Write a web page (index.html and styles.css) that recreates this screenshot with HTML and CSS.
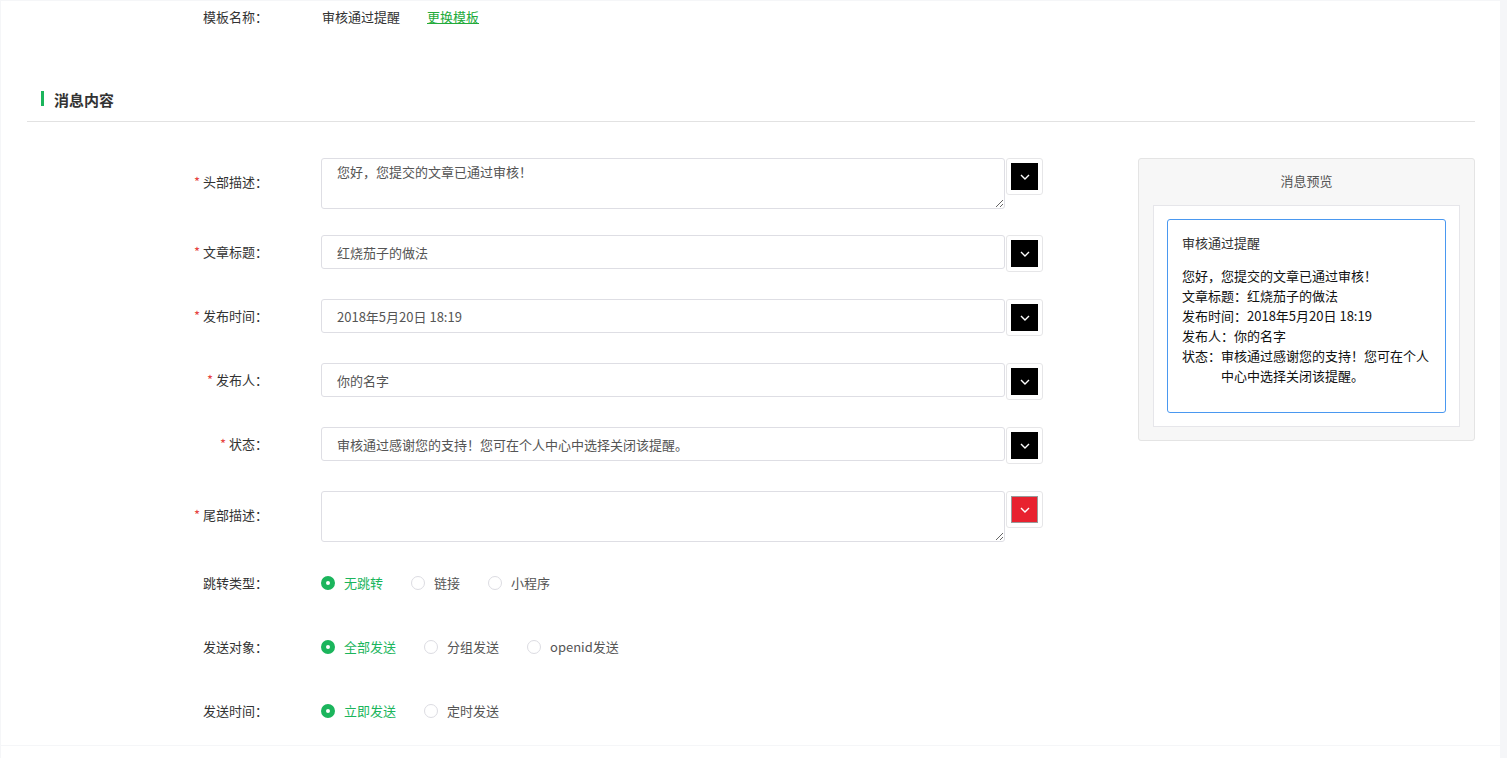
FILE: index.html
```html
<!DOCTYPE html>
<html lang="zh-CN">
<head>
    <meta charset="UTF-8">
    <meta name="viewport" content="width=device-width, initial-scale=1.0">
    <link rel="stylesheet" href="styles.css">
    <title>消息模板</title>
</head>
<body>

    <div class="panel">
        <div class="tpl-row">
            <span class="label">模板名称：</span>
            <span class="tpl-name">审核通过提醒</span>
            <a href="#" class="tpl-link">更换模板</a>
        </div>

        <div class="section">
            <h3 class="section-title">消息内容</h3>

            <div class="content">
                <form class="msg-form">
                    <div class="row row-area">
                        <label class="label label-area"><i>*</i> 头部描述：</label>
                        <textarea class="field area" placeholder="您好，您提交的文章已通过审核！"></textarea>
                        <span class="pick"><span class="swatch"><svg width="10" height="6" viewBox="0 0 10 6"><path d="M1 1l4 4 4-4" fill="none" stroke="#fff" stroke-width="1.4"/></svg></span></span>
                    </div>
                    <div class="row">
                        <label class="label"><i>*</i> 文章标题：</label>
                        <input class="field" type="text" value="红烧茄子的做法">
                        <span class="pick"><span class="swatch"><svg width="10" height="6" viewBox="0 0 10 6"><path d="M1 1l4 4 4-4" fill="none" stroke="#fff" stroke-width="1.4"/></svg></span></span>
                    </div>
                    <div class="row">
                        <label class="label"><i>*</i> 发布时间：</label>
                        <input class="field" type="text" value="2018年5月20日 18:19">
                        <span class="pick"><span class="swatch"><svg width="10" height="6" viewBox="0 0 10 6"><path d="M1 1l4 4 4-4" fill="none" stroke="#fff" stroke-width="1.4"/></svg></span></span>
                    </div>
                    <div class="row">
                        <label class="label"><i>*</i> 发布人：</label>
                        <input class="field" type="text" value="你的名字">
                        <span class="pick"><span class="swatch"><svg width="10" height="6" viewBox="0 0 10 6"><path d="M1 1l4 4 4-4" fill="none" stroke="#fff" stroke-width="1.4"/></svg></span></span>
                    </div>
                    <div class="row">
                        <label class="label"><i>*</i> 状态：</label>
                        <input class="field" type="text" value="审核通过感谢您的支持！您可在个人中心中选择关闭该提醒。">
                        <span class="pick"><span class="swatch"><svg width="10" height="6" viewBox="0 0 10 6"><path d="M1 1l4 4 4-4" fill="none" stroke="#fff" stroke-width="1.4"/></svg></span></span>
                    </div>
                    <div class="row row-area row-last">
                        <label class="label label-area"><i>*</i> 尾部描述：</label>
                        <textarea class="field area"></textarea>
                        <span class="pick"><span class="swatch red"><svg width="10" height="6" viewBox="0 0 10 6"><path d="M1 1l4 4 4-4" fill="none" stroke="#fff" stroke-width="1.4"/></svg></span></span>
                    </div>

                    <div class="row radio-row">
                        <label class="label">跳转类型：</label>
                        <div class="radios">
                            <span class="radio on"><b></b>无跳转</span>
                            <span class="radio"><b></b>链接</span>
                            <span class="radio"><b></b>小程序</span>
                        </div>
                    </div>
                    <div class="row radio-row">
                        <label class="label">发送对象：</label>
                        <div class="radios">
                            <span class="radio on"><b></b>全部发送</span>
                            <span class="radio"><b></b>分组发送</span>
                            <span class="radio"><b></b>openid发送</span>
                        </div>
                    </div>
                    <div class="row radio-row">
                        <label class="label">发送时间：</label>
                        <div class="radios">
                            <span class="radio on"><b></b>立即发送</span>
                            <span class="radio"><b></b>定时发送</span>
                        </div>
                    </div>
                </form>

                <div class="preview">
                    <p class="preview-title">消息预览</p>
                    <div class="preview-box">
                        <div class="card">
                            <p class="card-title">审核通过提醒</p>
                            <p>您好，您提交的文章已通过审核！</p>
                            <p>文章标题：红烧茄子的做法</p>
                            <p>发布时间：2018年5月20日 18:19</p>
                            <p>发布人：你的名字</p>
                            <p class="hang"><span>状态：</span><span>审核通过感谢您的支持！您可在个人中心中选择关闭该提醒。</span></p>
                        </div>
                    </div>
                </div>
            </div>
        </div>
    </div>

    <div class="footer"></div>

</body>
</html>
```

FILE: styles.css
```css
body {
    margin: 0;
    padding-top: 1px;
    background-color: #f5f6f8;
    font-family: "Noto Sans CJK SC", "Liberation Sans", sans-serif;
    font-size: 13px;
    color: #333;
}

p {
    margin: 0;
}

.panel {
    margin-left: 1px;
    width: 1499px;
    height: 744px;
    background-color: #fff;
    box-sizing: border-box;
}

.footer {
    margin: 1px 0 0 1px;
    width: 1499px;
    height: 20px;
    background-color: #fff;
}

.label {
    display: inline-block;
    width: 267px;
    text-align: right;
    line-height: 34px;
    color: #333;
    flex-shrink: 0;
}

.label i {
    font-style: normal;
    color: #e64340;
}

.tpl-row {
    display: flex;
    line-height: 32px;
}

.tpl-row .label {
    line-height: 32px;
}

.tpl-name {
    margin-left: 54px;
}

.tpl-link {
    margin-left: 27px;
    color: #22ab3a;
}

.section {
    margin: 0 25px 0 26px;
}

.section-title {
    margin: 56px 0 0;
    padding: 0 0 10px 27px;
    border-bottom: 1px solid #e2e2e2;
    font-size: 15px;
    line-height: 22px;
    color: #333;
    position: relative;
}

.section-title::before {
    content: "";
    position: absolute;
    left: 14px;
    top: 2px;
    width: 3px;
    height: 15px;
    background-color: #1bb55c;
}

.content {
    display: flex;
    align-items: flex-start;
    margin-top: 36px;
}

.msg-form {
    margin: 0 0 0 -26px;
}

.row {
    display: flex;
    align-items: flex-start;
    margin-bottom: 27px;
}

.row-area {
    margin-bottom: 26px;
}

.row-last {
    margin-bottom: 24px;
}

.label-area {
    padding-top: 7px;
}

.field {
    margin-left: 53px;
    width: 684px;
    height: 34px;
    box-sizing: border-box;
    border: 1px solid #dedee4;
    border-radius: 3px;
    padding: 0 15px;
    font-family: inherit;
    font-size: 13px;
    color: #555;
    outline: none;
}

.area {
    height: 51px;
    padding-top: 3px;
    line-height: 20px;
}

.area::placeholder {
    color: #555;
}

.pick {
    margin-left: 1px;
    width: 37px;
    height: 37px;
    box-sizing: border-box;
    border: 1px solid #e6e6e8;
    border-radius: 3px;
    padding: 4px;
}

.swatch {
    display: flex;
    align-items: center;
    justify-content: center;
    width: 27px;
    height: 27px;
    background-color: #000;
}

.swatch.red {
    background-color: #e8222f;
    border: 1px solid #999;
    box-sizing: border-box;
}

.radio-row {
    margin-bottom: 30px;
}

.radios {
    display: flex;
    margin-left: 53px;
    line-height: 34px;
}

.radio {
    display: flex;
    align-items: center;
    margin-right: 28px;
    color: #555;
}

.radio b {
    width: 14px;
    height: 14px;
    box-sizing: border-box;
    border: 1px solid #dcdce2;
    border-radius: 50%;
    margin-right: 9px;
}

.radio.on {
    color: #1bb55c;
}

.radio.on b {
    border: 5px solid #1bb55c;
    background-color: #fff;
}

.preview {
    margin-left: auto;
    width: 337px;
    height: 283px;
    box-sizing: border-box;
    background-color: #f7f7f7;
    border: 1px solid #e4e4e4;
    border-radius: 3px;
    padding: 12px 14px 0;
}

.preview-title {
    text-align: center;
    line-height: 20px;
    color: #555;
}

.preview-box {
    margin-top: 14px;
    height: 222px;
    box-sizing: border-box;
    background-color: #fff;
    border: 1px solid #e6e6ea;
    padding: 13px;
}

.card {
    height: 194px;
    box-sizing: border-box;
    border: 1px solid #4a98f0;
    border-radius: 3px;
    padding: 13px 14px;
    line-height: 20px;
    color: #111;
}

.card-title {
    color: #333;
    margin-bottom: 13px;
}

.hang {
    display: flex;
}

.hang span:first-child {
    flex-shrink: 0;
}
```
